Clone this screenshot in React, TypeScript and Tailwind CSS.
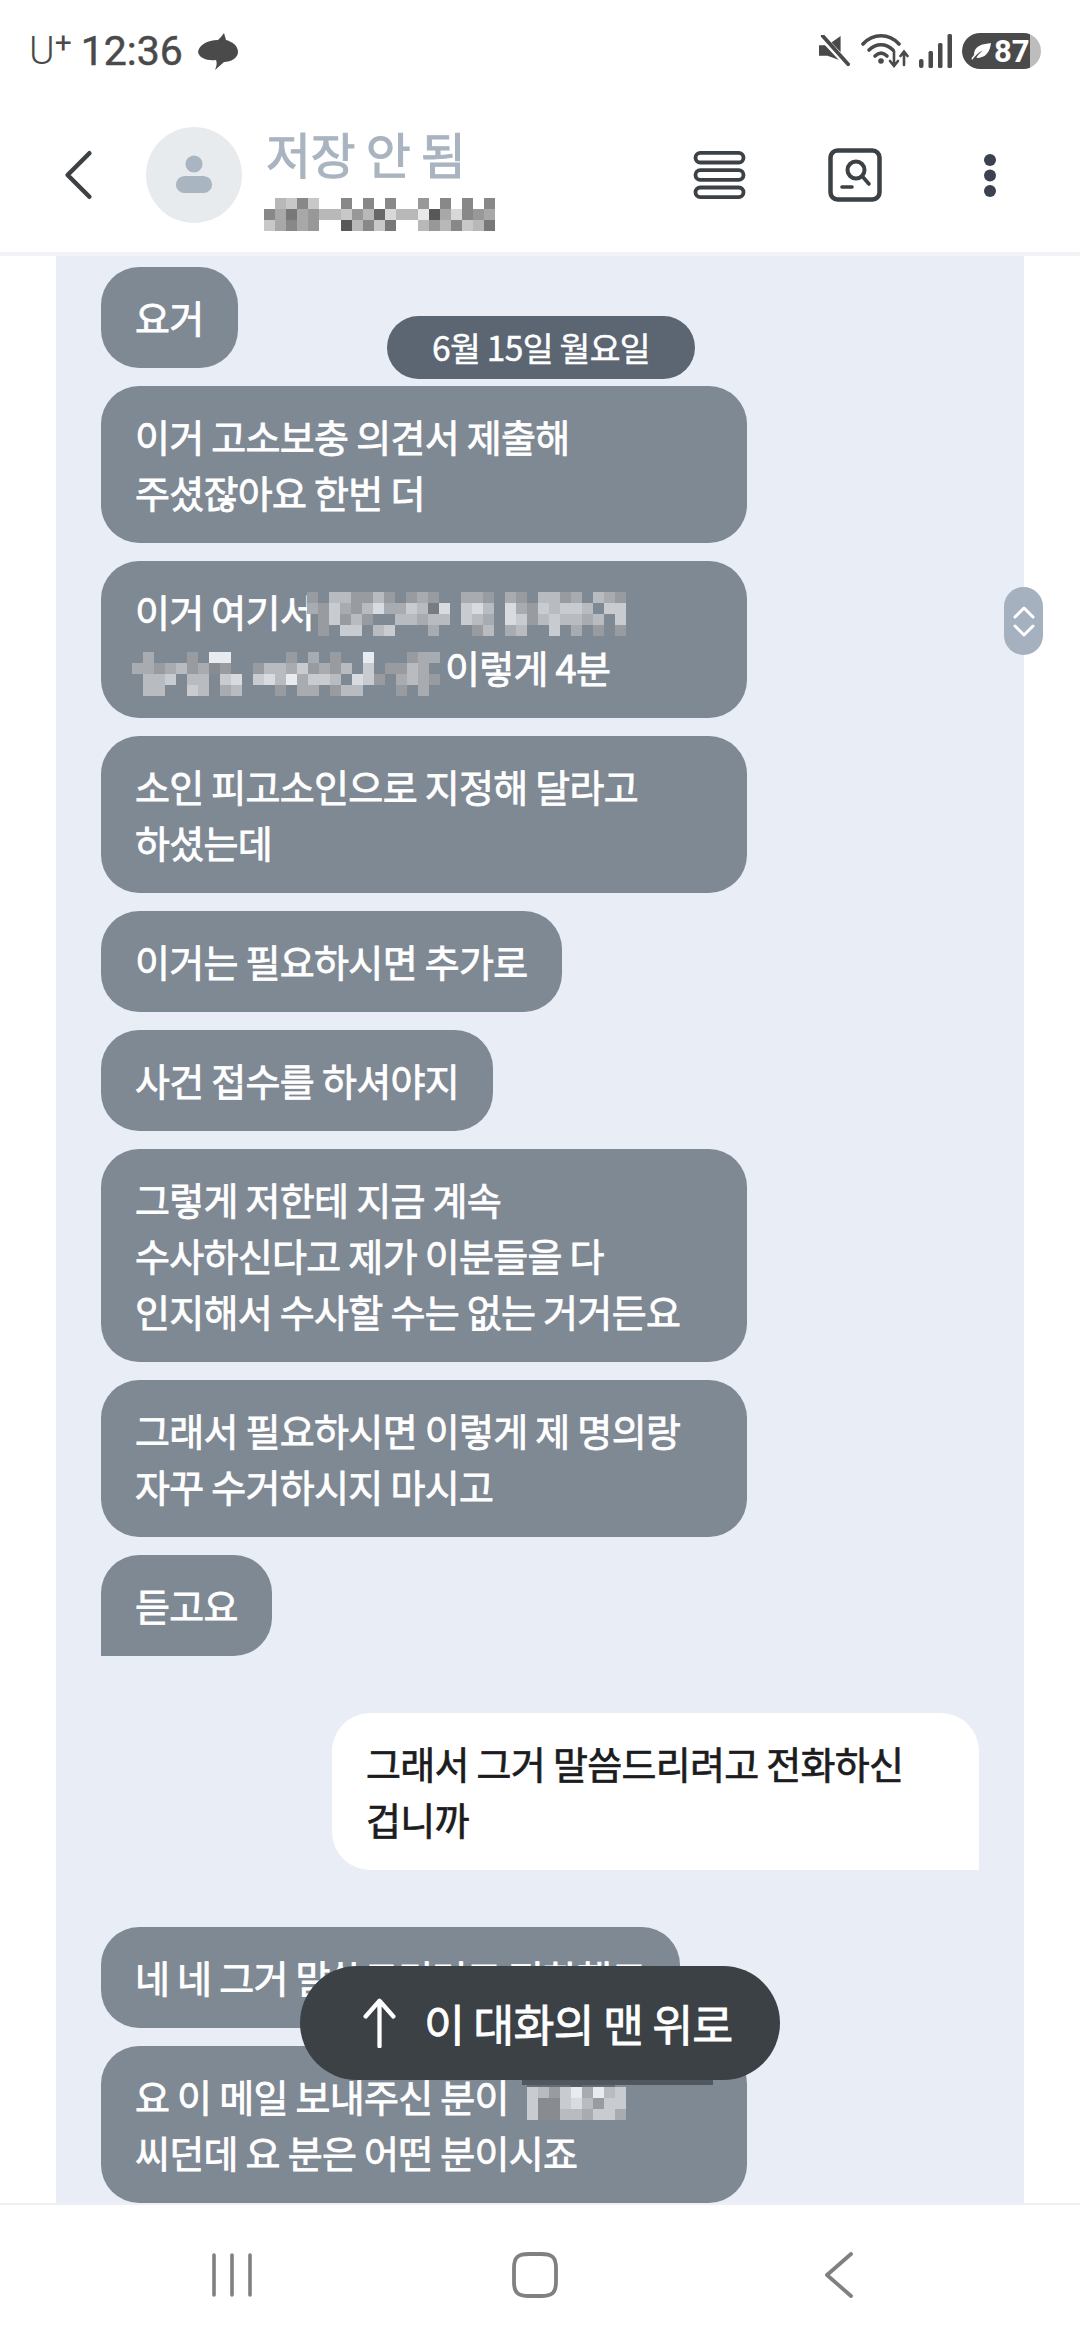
import React from "react";

const KR = "font-['Noto_Sans_CJK_KR','Noto_Sans',sans-serif]";

function Mosaic({ rows, cell, cls, cool }: { rows: string[]; cell: number; cls?: string; cool?: boolean }) {
  const w = Math.max(...rows.map((r) => r.length)) * cell;
  const h = rows.length * cell;
  return (
    <svg width={w} height={h} viewBox={`0 0 ${w} ${h}`} className={cls} shapeRendering="crispEdges">
      {rows.map((r, y) =>
        r.split("").map((c, x) => {
          if (c === ".") return null;
          const v = parseInt(c, 16) * 16 + 8;
          return <rect key={`${x}-${y}`} x={x * cell} y={y * cell} width={cell + 0.3} height={cell + 0.3} fill={cool ? `rgb(${v},${v + 3},${v + 8})` : `rgb(${v},${v},${v})`} />;
        })
      )}
    </svg>
  );
}

function Bubble({ children, w, me, flat }: { children: React.ReactNode; w?: string; me?: boolean; flat?: boolean }) {
  return (
    <div
      className={`relative shrink-0 rounded-[38px] px-[34px] pb-[23px] pt-[22px] text-[38px] leading-[56px] tracking-[-0.7px] ${w ?? ""} ${
        me
          ? "self-end rounded-br-none bg-white text-[#1c1c1e] [-webkit-text-stroke:0.7px_#1c1c1e]"
          : "self-start bg-[#7f8994] text-white [-webkit-text-stroke:0.8px_#ffffff]"
      } ${flat ? "rounded-bl-none" : ""}`}
    >
      {children}
    </div>
  );
}

export default function App() {
  return (
    <div className={`relative flex h-[2340px] w-[1080px] flex-col overflow-hidden bg-white ${KR}`}>
      {/* status bar */}
      <div className="flex h-[100px] shrink-0 items-center justify-between pl-[29px] pr-[39px] pt-[2px] text-[#4a4a4a]">
        <div className="flex items-center">
          <span className="font-['Roboto',sans-serif] text-[39px] font-light leading-none">U</span>
          <span className="mb-[16px] font-['Roboto',sans-serif] text-[30px] leading-none">+</span>
          <span className="ml-[9px] font-['Roboto',sans-serif] text-[41px] font-normal leading-none [-webkit-text-stroke:0.5px_#4a4a4a]">12:36</span>
          <svg width="40" height="37" viewBox="0 0 40 37" className="ml-[15px]">
            <path d="M0 19 C1 12 9 7 20 7 C22 5 24 3 26 0 L28 7 C35 9 40 13 40 19 C40 25 33 29 26 29 L17 37 C19 32 19 30 18 27 C9 28 1 25 0 19Z" fill="#4a4a4a" />
          </svg>
        </div>
        <div className="flex items-center">
          <svg width="31" height="32" viewBox="0 0 33 34" fill="#4a4a4a">
            <path d="M0 11 H9 L23 1 V27 L9 22 H0Z" />
            <path d="M3 2 L31 32" stroke="#fff" strokeWidth="7" />
            <path d="M4 1 L31 31" stroke="#4a4a4a" strokeWidth="4" strokeLinecap="round" />
          </svg>
          <svg width="48" height="36" viewBox="0 0 48 36" fill="none" stroke="#4a4a4a" strokeWidth="3.6" strokeLinecap="round" className="ml-[11px]">
            <path d="M2 11 C12 0 28 0 38 11" />
            <path d="M8 17 C15 10 25 10 32 17" />
            <path d="M14 23 C18 19 22 19 26 23" />
            <circle cx="20" cy="28" r="2.8" fill="#4a4a4a" stroke="none" />
            <path d="M33 18 V32 M29 28 L33 33 L37 28" strokeWidth="2.6" />
            <path d="M43 32 V19 M39.5 23 L43 18.5 L46.5 23" strokeWidth="2.6" />
          </svg>
          <svg width="33" height="34" viewBox="0 0 33 34" fill="#4a4a4a" className="ml-[10px]">
            <rect x="0" y="25" width="4.5" height="9" rx="2" />
            <rect x="9.5" y="17" width="4.5" height="17" rx="1.5" />
            <rect x="19" y="9" width="4.5" height="25" rx="1.5" />
            <rect x="28.5" y="0" width="4.5" height="34" rx="1.5" />
          </svg>
          <div className="relative ml-[10px] flex h-[36px] w-[79px] items-center overflow-hidden rounded-full bg-[#bdbdbd]">
            <div className="flex h-full w-[68px] items-center rounded-l-full rounded-r-[8px] bg-[#4a4a4a] pl-[9px]">
              <svg width="21" height="19" viewBox="0 0 20 18" fill="#fff">
                <path d="M1 17 C4 13 7 10 11 8 C8 11 6 13 5 15 C12 16 18 11 19 1 C12 2 3 3 3 12 L0.5 15.5Z" />
              </svg>
              <span className="ml-[2px] font-['Roboto',sans-serif] text-[31px] font-bold leading-none text-white">87</span>
            </div>
          </div>
        </div>
      </div>

      {/* header */}
      <div className="flex h-[156px] shrink-0 items-center border-b-[4px] border-[#f2f3f6] pb-[2px]">
        <svg width="29" height="52" viewBox="0 0 32 54" fill="none" stroke="#3c4146" strokeWidth="5" strokeLinecap="round" strokeLinejoin="round" className="ml-[64px]">
          <path d="M28 3 L4 27 L28 51" />
        </svg>
        <div className="ml-[53px] flex h-[96px] w-[96px] shrink-0 items-center justify-center rounded-full bg-[#e8ebee]">
          <svg width="40" height="40" viewBox="0 0 40 42" fill="#a9b5c1">
            <circle cx="20" cy="9.5" r="9" />
            <rect x="1" y="22" width="38" height="18" rx="9" />
          </svg>
        </div>
        <div className="ml-[22px] flex flex-col pt-[12px]">
          <span className="ml-[2px] text-[49px] leading-[44px] tracking-[-0.5px] text-[#a9b4c0] [-webkit-text-stroke:1px_#a9b4c0]">저장 안 됨</span>
          <Mosaic
            cell={11}
            cls="mt-[23px]"
            rows={[
              ".bc8c..8.8.8..9.8.8.8",
              "8a7a9bbc9b6dbbe5ad89a",
              "ca8a9..5b8c7..b9b8cb7",
            ]}
          />
        </div>
        <div className="ml-auto flex items-center">
          <svg width="55" height="48" viewBox="0 0 54 50" fill="none" stroke="#3c4146" strokeWidth="4">
            <rect x="2" y="2" width="50" height="10" rx="5" />
            <rect x="2" y="20" width="50" height="10" rx="5" />
            <rect x="2" y="38" width="50" height="10" rx="5" />
          </svg>
          <svg width="54" height="54" viewBox="0 0 54 54" fill="none" stroke="#3c4146" className="ml-[81px]">
            <rect x="2.5" y="2.5" width="49" height="49" rx="7" strokeWidth="4.5" />
            <circle cx="28" cy="22" r="8.5" strokeWidth="4" />
            <path d="M34 28 L41 36" strokeWidth="3.6" strokeLinecap="round" />
            <path d="M14 39 H24" strokeWidth="3.6" strokeLinecap="round" />
          </svg>
          <svg width="12" height="49" viewBox="0 0 14 50" fill="#3c4150" className="ml-[102px] mr-[84px]">
            <circle cx="7" cy="7" r="7" />
            <circle cx="7" cy="25" r="7" />
            <circle cx="7" cy="43" r="7" />
          </svg>
        </div>
      </div>

      {/* chat */}
      <div className="relative mx-[56px] flex min-h-0 flex-1 flex-col gap-[18px] overflow-hidden bg-[#e9edf5] px-[45px] pt-[11px]">
        <Bubble>요거</Bubble>
        <Bubble w="w-[646px]">
          이거 고소보충 의견서 제출해
          <br />
          주셨잖아요 한번 더
        </Bubble>
        <Bubble w="w-[646px]">
          이거 여기서
          <div className="flex h-[56px] items-center">
            <span className="w-[310px] shrink-0" />
            <span>이렇게 4분</span>
          </div>
          <Mosaic
            cell={11}
            cool
            cls="absolute left-[206px] top-[31px]"
            rows={[
              "9.bb99b9.9a9..aa9.a9.bb9a.ba9",
              "a9ca9bdaacb7d.cdb.da9cbccb.cc",
              ".9c9b9..bbabb.cba.dc9bcbbab.c",
              ".9.cc.bc...a...9b.ab..c.a.9.9",
            ]}
          />
          <Mosaic
            cell={11}
            cool
            cls="absolute left-[31px] top-[91px]"
            rows={[
              ".a...9.ee.....9.a.9..e...9aa",
              "aa9ab9a89..9bbac9a9b.c.99ba.",
              ".bbc.bb.cd.cdbeaccb.dc9.aba9",
              ".bb..cb.ab...9.aa.9bb...9.a.",
            ]}
          />
        </Bubble>
        <Bubble w="w-[646px]">
          소인 피고소인으로 지정해 달라고
          <br />
          하셨는데
        </Bubble>
        <Bubble>이거는 필요하시면 추가로</Bubble>
        <Bubble>사건 접수를 하셔야지</Bubble>
        <Bubble w="w-[646px]">
          그렇게 저한테 지금 계속
          <br />
          수사하신다고 제가 이분들을 다
          <br />
          인지해서 수사할 수는 없는 거거든요
        </Bubble>
        <Bubble w="w-[646px]">
          그래서 필요하시면 이렇게 제 명의랑
          <br />
          자꾸 수거하시지 마시고
        </Bubble>
        <Bubble flat>듣고요</Bubble>
        <div className="h-[21px] shrink-0" />
        <Bubble me w="w-[647px]">
          그래서 그거 말씀드리려고 전화하신
          <br />
          겁니까
        </Bubble>
        <div className="h-[21px] shrink-0" />
        <Bubble>네 네 그거 말씀드리려고 전화했고</Bubble>
        <Bubble w="w-[646px]">
          요 이 메일 보내주신 분이
          <br />
          씨던데 요 분은 어떤 분이시죠
          <Mosaic cell={11} cool cls="absolute left-[426px] top-[30px]" rows={["666656668", "cb9ceaebc", "c88cdb9cc", "c88bbacca"]} />
        </Bubble>

        <div className="absolute left-[331px] top-[60px] flex h-[63px] w-[308px] items-center justify-center rounded-full bg-[#5b6672] text-[33.5px] tracking-[-0.7px] text-white [-webkit-text-stroke:0.5px_#ffffff]">
          6월 15일 월요일
        </div>
      </div>

      {/* scroll handle */}
      <div className="absolute left-[1004px] top-[587px] flex h-[68px] w-[39px] flex-col items-center justify-center gap-[5px] rounded-full bg-[#a5b1be]">
        <svg width="22" height="13" viewBox="0 0 22 13" fill="none" stroke="#fff" strokeWidth="3" strokeLinecap="round" strokeLinejoin="round">
          <path d="M2 11 L11 2 L20 11" />
        </svg>
        <svg width="22" height="13" viewBox="0 0 22 13" fill="none" stroke="#fff" strokeWidth="3" strokeLinecap="round" strokeLinejoin="round">
          <path d="M2 2 L11 11 L20 2" />
        </svg>
      </div>

      {/* jump to top */}
      <div className="absolute left-[522px] top-[2075px] h-[10px] w-[191px] bg-[#50575f]" />
      <div className="absolute left-[300px] top-[1966px] flex h-[114px] w-[480px] items-center rounded-full bg-[#3c4146] pl-[62px]">
        <svg width="35" height="50" viewBox="0 0 36 54" fill="none" stroke="#fff" strokeWidth="4.6" strokeLinecap="round" strokeLinejoin="round">
          <path d="M18 52 V3 M3 20 L18 3 L33 20" />
        </svg>
        <span className="ml-[27px] text-[44.5px] tracking-[-0.8px] text-white [-webkit-text-stroke:0.8px_#ffffff]">이 대화의 맨 위로</span>
      </div>

      {/* nav */}
      <div className="flex h-[137px] shrink-0 items-center border-t-[2px] border-[#eef0f5] pl-[212px] pt-[4px]">
        <svg width="40" height="44" viewBox="0 0 40 44" fill="none" stroke="#808080" strokeWidth="3.6" strokeLinecap="round">
          <path d="M2 2 V42 M20 2 V42 M38 2 V42" />
        </svg>
        <svg width="46" height="46" viewBox="0 0 46 46" fill="none" stroke="#808080" strokeWidth="3.8" className="ml-[260px]">
          <path d="M2 16 C2 5 6 2 17 2 H29 C40 2 44 5 44 16 V30 C44 41 40 44 29 44 H17 C6 44 2 41 2 30Z" />
        </svg>
        <svg width="28" height="46" viewBox="0 0 28 46" fill="none" stroke="#808080" strokeWidth="3.8" strokeLinecap="round" strokeLinejoin="round" className="ml-[267px]">
          <path d="M26 2 L2 23 L26 44" />
        </svg>
      </div>
    </div>
  );
}
